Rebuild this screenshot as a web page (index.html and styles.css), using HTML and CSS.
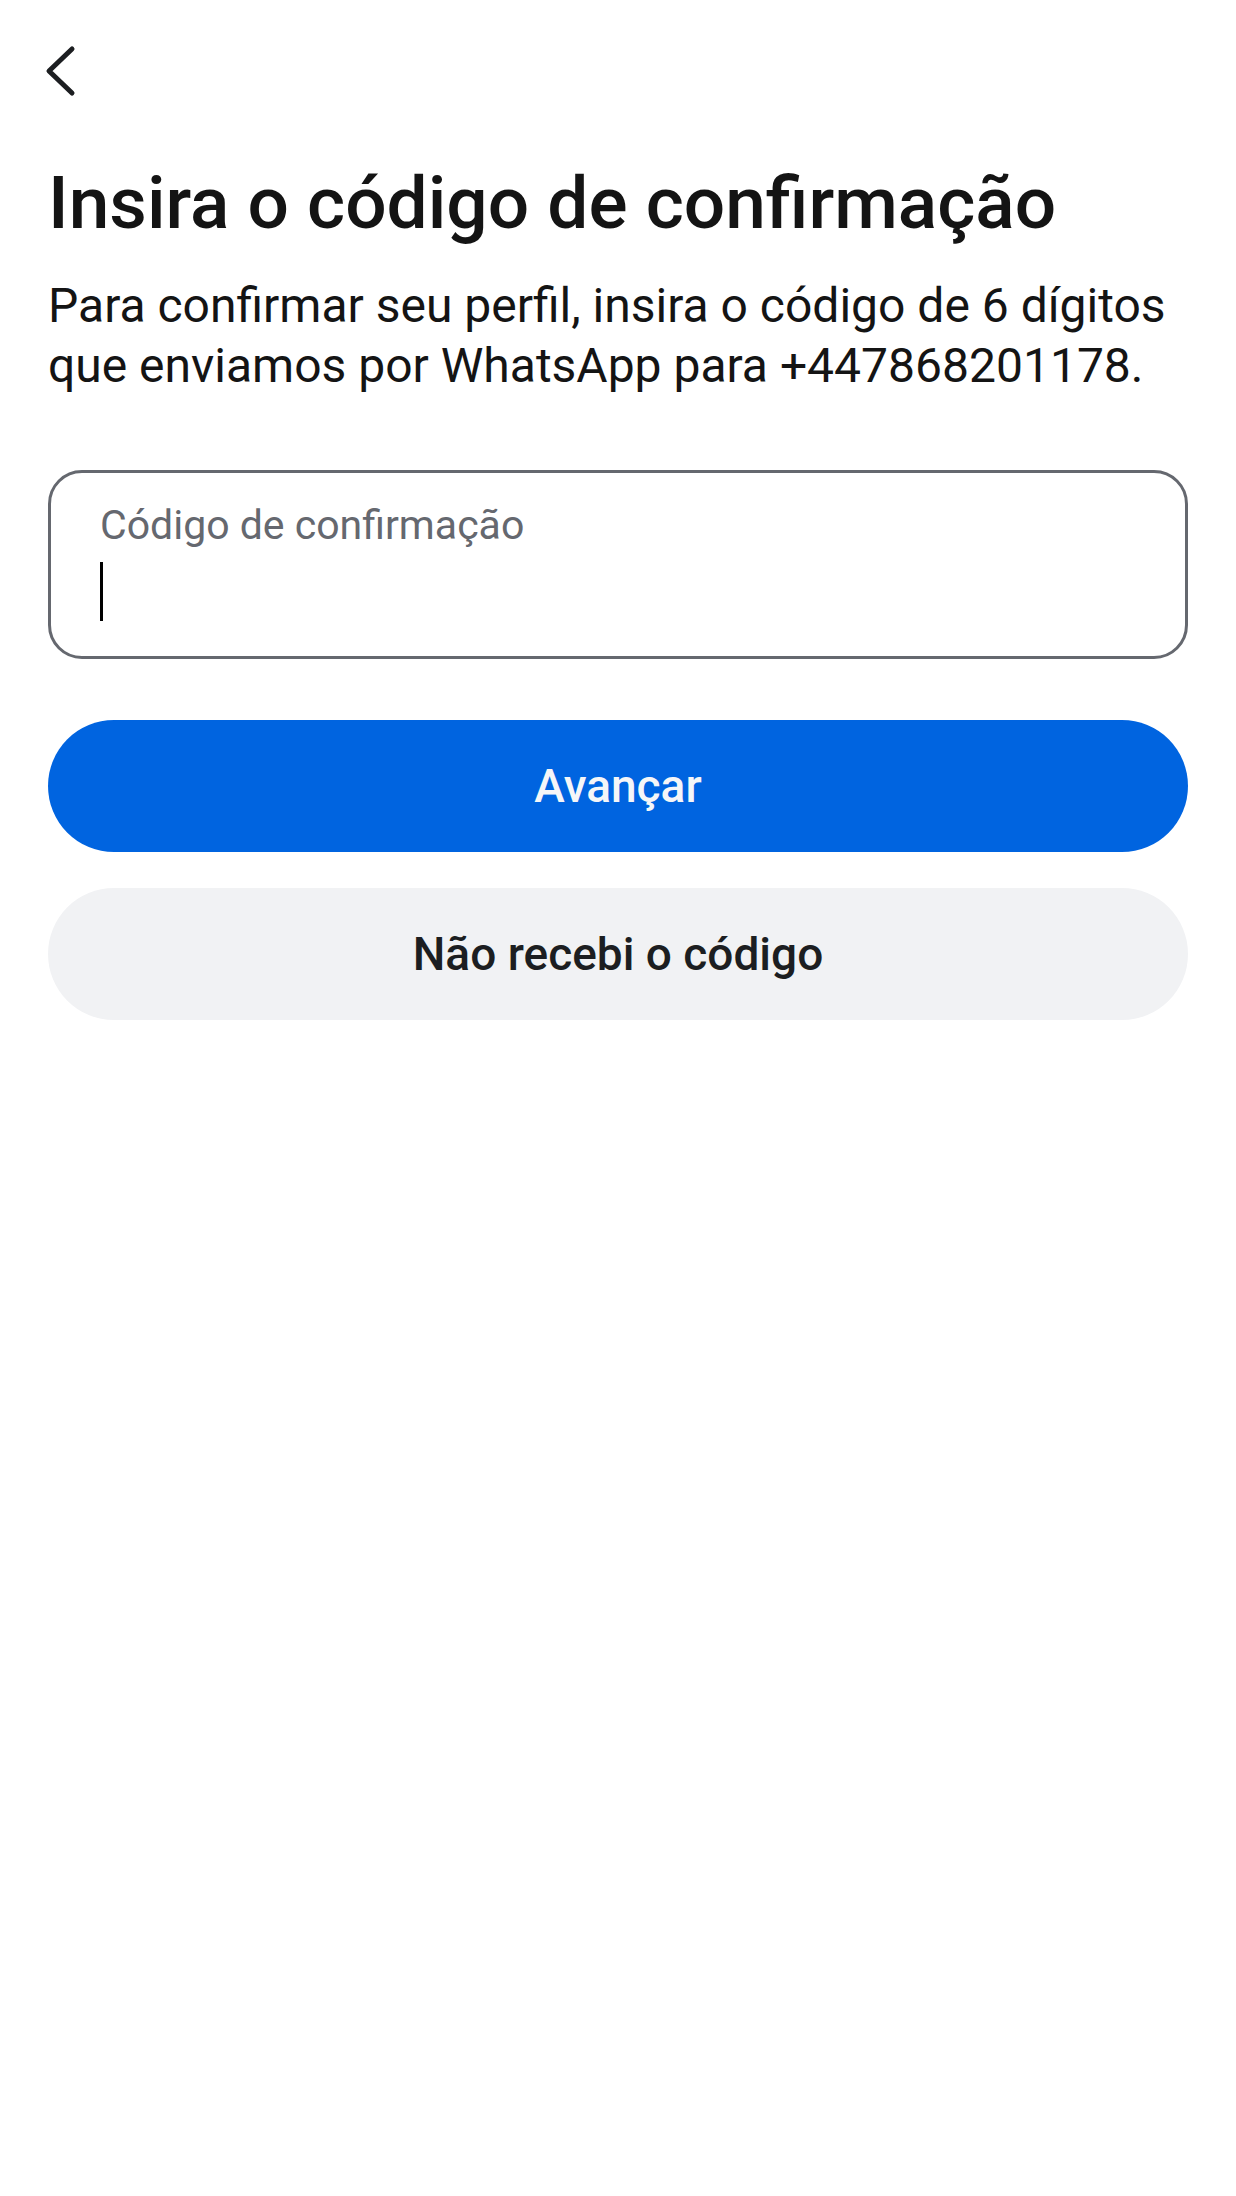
FILE: index.html
```html
<!DOCTYPE html>
<html>
<head>
  <title>Insira o código de confirmação</title>
  <link rel="stylesheet" href="styles.css">
</head>
<body>
  <div class="page">
    <div class="top-bar">
      <button class="back-btn" aria-label="Voltar">
        <svg width="36" height="54" viewBox="0 0 36 54">
          <path d="M30 5 L7 27 L30 49" fill="none" stroke="#1c1e21" stroke-width="5" stroke-linecap="round" stroke-linejoin="round"/>
        </svg>
      </button>
    </div>

    <h1 class="title">Insira o código de confirmação</h1>
    <p class="subtitle">Para confirmar seu perfil, insira o código de 6 dígitos que enviamos por WhatsApp para +447868201178.</p>

    <div class="field">
      <div class="field-label">Código de confirmação</div>
      <div class="field-input"><span class="caret"></span></div>
    </div>

    <button class="btn btn-primary">Avançar</button>
    <button class="btn btn-secondary">Não recebi o código</button>
  </div>
</body>
</html>
```

FILE: styles.css
```css
body {
  margin: 0;
  background: #ffffff;
  font-family: Roboto, "Liberation Sans", sans-serif;
  color: #1c1e21;
}
.page {
  padding: 0 48px;
  display: flex;
  flex-direction: column;
}
.top-bar {
  height: 120px;
  display: flex;
  align-items: flex-start;
  padding-top: 44px;
  box-sizing: border-box;
}
.back-btn {
  background: none;
  border: none;
  padding: 0;
  margin-left: -6px;
  cursor: pointer;
  display: flex;
}
.title {
  margin: 43px 0 0;
  font-size: 73px;
  font-weight: 500;
  line-height: 80px;
  color: #141414;
}
.subtitle {
  margin: 33px 0 0;
  font-size: 48px;
  line-height: 60px;
  color: #141414;
}
.field {
  margin-top: 74px;
  height: 189px;
  box-sizing: border-box;
  border: 3px solid #65686f;
  border-radius: 34px;
  padding: 28px 49px 0;
}
.field-label {
  font-size: 41px;
  line-height: 48px;
  color: #65686f;
}
.field-input {
  padding-top: 13px;
}
.caret {
  display: block;
  width: 3px;
  height: 59px;
  background: #000000;
}
.btn {
  display: block;
  width: 100%;
  height: 132px;
  border: none;
  border-radius: 66px;
  font-family: Roboto, "Liberation Sans", sans-serif;
  font-size: 46px;
  font-weight: 500;
  cursor: pointer;
}
.btn-primary {
  margin-top: 61px;
  background: #0064e0;
  color: #f5f6f8;
}
.btn-secondary {
  margin-top: 36px;
  background: #f1f2f4;
  color: #1c1e21;
}
```
